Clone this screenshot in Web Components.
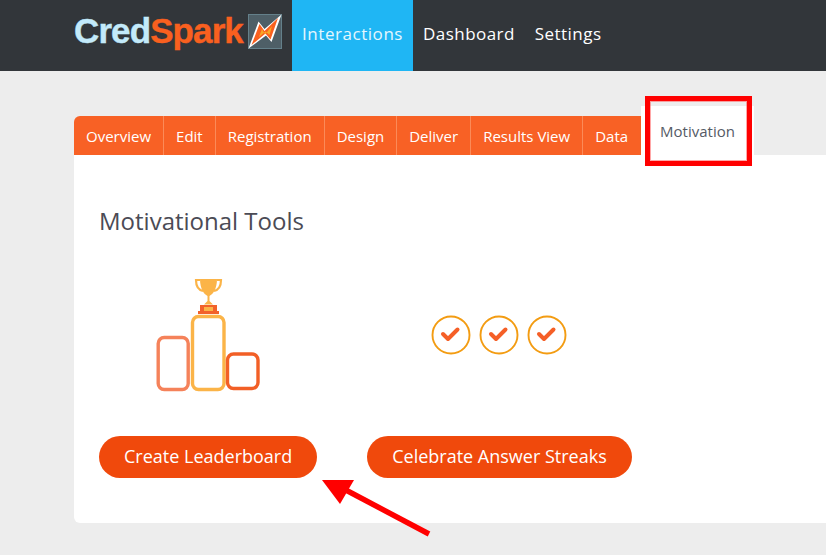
<!DOCTYPE html>
<html><head><meta charset="utf-8"><style>
html,body{margin:0;padding:0;background:#ededed;height:555px;overflow:hidden;font-family:"Open Sans",sans-serif}
</style></head><body>
<app-page></app-page>
<script>
function def(name,html){customElements.define(name,class extends HTMLElement{constructor(){super();this.attachShadow({mode:'open'}).innerHTML=html}})}
def('cs-logo',`<style>:host{display:flex;align-items:flex-start;width:218px;padding-top:9px;box-sizing:border-box}
.t{font:bold 35px/44px "Liberation Sans",sans-serif;letter-spacing:-.9px;color:#c3eafa;white-space:nowrap;width:173px;-webkit-text-stroke:.4px currentColor}
.t b{color:#f9601f;font-weight:bold}
svg{margin:5px 0 0 1px;flex:none}</style>
<div class="t">Cred<b>Spark</b></div>
<svg width="34" height="35" viewBox="0 0 34 35"><rect x=".5" y=".5" width="33" height="34" fill="#4e5f67" stroke="#64808a"/><path d="M0.500 34.500 L10.500 7.500 L16.500 15 L33.500 .5 L23.500 28 L18 21.500 Z" fill="#fff"/><path d="M3.500 31 L11.500 10 L16.500 17 L30 4 L22.500 25.500 L17.500 19.500 Z" fill="#f9601f"/><path d="M11 23 L14 15 L17 20.500 L24 12 L21.500 21 L17.500 17.500 Z" fill="#f9a825"/></svg>`);
def('nav-item',`<style>:host{display:flex;align-items:center;padding:0 10px 4px;height:71px;box-sizing:border-box;color:#fff;font-size:17px;font-weight:500;letter-spacing:.45px;white-space:nowrap}
:host([active]){background:#1fb6f4;color:#e4f6fe;font-weight:400;letter-spacing:.55px}</style><slot></slot>`);
def('app-header',`<style>:host{display:flex;height:71px;background:#32363a;padding-left:74px}nav{display:flex}</style>
<cs-logo></cs-logo><nav><slot></slot></nav>`);
def('tab-item',`<style>:host{display:flex;align-items:center;height:39px;padding:0 12px;box-sizing:border-box;background:#f86125;color:#fff;font-size:15px;letter-spacing:0;border-right:1px solid #fb8a58;white-space:nowrap}
:host(:first-child){border-top-left-radius:6px}
:host([last]){border-right:0;padding-right:13px}
:host([active]){background:#fff;color:#555b66;height:49px;padding:0 0 0 19px;width:113px;border:0}</style><slot></slot>`);
def('tab-bar',`<style>:host{display:flex;align-items:flex-end;height:49px}</style><slot></slot>`);
def('tool-card',`<style>:host{display:flex;flex-direction:column;align-items:center;flex:none}
.i{height:188px;display:flex;align-items:flex-end;justify-content:center}
.b{box-sizing:border-box;height:42px;padding:0 25px;border-radius:21px;background:#f0490c;color:#fff;font:18px/40px "Open Sans",sans-serif;letter-spacing:0;text-align:center;white-space:nowrap;margin-top:9px}
</style><div class="i"><slot name="icon"></slot></div><div class="b"><slot></slot></div>`);
def('check-badge',`<style>:host{display:block;width:40px;height:40px}</style><svg width="40" height="40" viewBox="0 0 40 40" style="display:block"><circle cx="20" cy="20" r="18.500" fill="#fff" stroke="#f39c12" stroke-width="1.900"/><path d="M12 19 L17 24 L26.500 14.500" fill="none" stroke="#f55f27" stroke-width="4" stroke-linecap="round" stroke-linejoin="round"/></svg>`);
def('app-page',`<style>:host{display:block;position:relative;width:826px;height:555px;overflow:hidden}
main{padding:35px 0 0 74px}
.card{background:#fff;height:368px;border-bottom-left-radius:6px;padding:48px 0 0 25px;box-sizing:border-box}
h2{margin:0;font:400 24px/36px "Open Sans",sans-serif;color:#4b4b55;letter-spacing:0}
.tools{display:flex;gap:50px}
.box{position:absolute;left:645px;top:96px;width:107px;height:70px;box-sizing:border-box;border:5px solid #f00;outline:1px solid rgba(255,80,80,.5);outline-offset:-6px}
.arrow{position:absolute;left:318px;top:478px}
</style>
<app-header><nav-item active>Interactions</nav-item><nav-item>Dashboard</nav-item><nav-item>Settings</nav-item></app-header>
<main><tab-bar><tab-item>Overview</tab-item><tab-item>Edit</tab-item><tab-item>Registration</tab-item><tab-item>Design</tab-item><tab-item>Deliver</tab-item><tab-item>Results View</tab-item><tab-item last>Data</tab-item><tab-item active>Motivation</tab-item></tab-bar>
<div class="card"><h2>Motivational Tools</h2>
<div class="tools">
<tool-card><svg slot="icon" width="110" height="120" viewBox="0 0 110 120" style="margin-bottom:32px;display:block">
<rect x="5.200" y="62.500" width="30" height="52" rx="6" fill="none" stroke="#f5825a" stroke-width="3.400"/>
<rect x="39.500" y="41.500" width="31.500" height="73" rx="6" fill="none" stroke="#fbb448" stroke-width="3.400"/>
<rect x="74.500" y="79" width="30.500" height="34.500" rx="6" fill="none" stroke="#f25f26" stroke-width="3.400"/>
<path d="M47 39 V30 H64 V39 Z" fill="#f2622a"/><rect x="45" y="36" width="21" height="3" fill="#f2622a"/><rect x="51" y="32" width="9" height="4" fill="#fbb448"/>
<path d="M47 4 H64 C64 14 60 19 56.500 21 L56.500 26 L60 29.500 H51 L54.500 26 L54.500 21 C51 19 47 14 47 4 Z" fill="#fbb448"/>
<path d="M47 5 H43 C43 12 46 15 50 16 M64 5 H68 C68 12 65 15 61 16" fill="none" stroke="#fbb448" stroke-width="2.200"/>
</svg>Create Leaderboard</tool-card>
<tool-card><div slot="icon" style="display:flex;gap:8px;padding-bottom:72px"><check-badge></check-badge><check-badge></check-badge><check-badge></check-badge></div>Celebrate Answer Streaks</tool-card>
</div></div></main>
<div class="box"></div>
<svg class="arrow" width="116" height="60" viewBox="0 0 116 60"><path d="M111 56 L24 10" stroke="#f00" stroke-width="5.500" fill="none"/><path d="M4 1 H36 L22 25 Z" fill="#f00" transform="translate(0,1)"/></svg>`);
</script></body></html>
